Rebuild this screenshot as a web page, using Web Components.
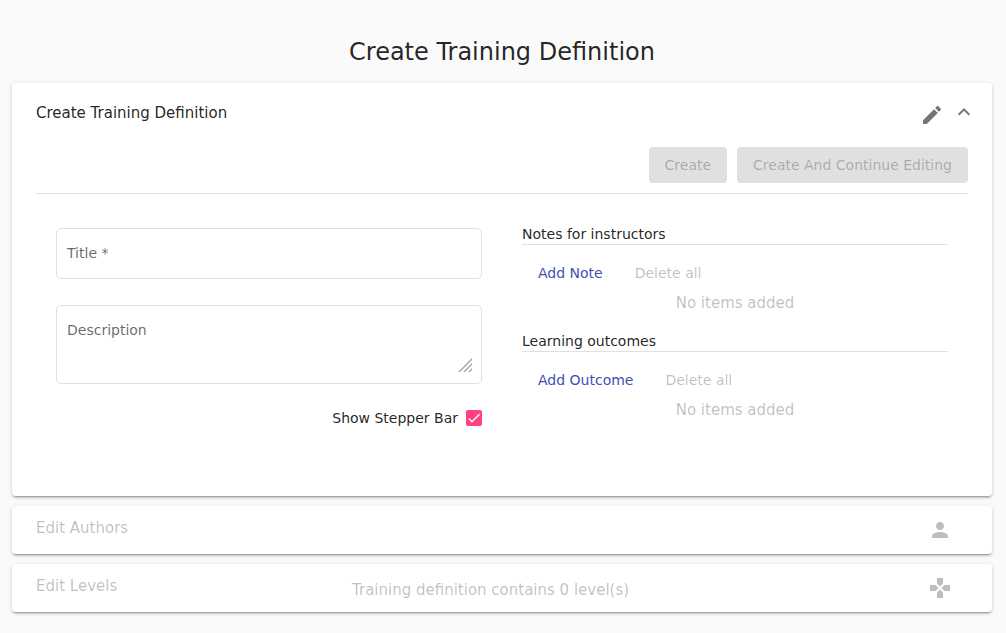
<!DOCTYPE html>
<html lang="en">
<head>
<meta charset="utf-8">
<title>Create Training Definition</title>
<style>
  body { margin: 0; background: #fafafa; color: rgba(0,0,0,.87); font: 14px/20px "DejaVu Sans", sans-serif; }
</style>
</head>
<body>
<training-page></training-page>
<script>
function define(name, html, setup) {
  const tpl = document.createElement('template');
  tpl.innerHTML = html;
  customElements.define(name, class extends HTMLElement {
    constructor() {
      super();
      this.attachShadow({ mode: 'open' }).append(tpl.content.cloneNode(true));
    }
    connectedCallback() { if (setup) setup(this, this.shadowRoot); }
  });
}

define('expansion-panel', `
<style>
  :host { display: block; background: #fff; border-radius: 4px;
    box-shadow: 0 3px 1px -2px rgba(0,0,0,.2), 0 2px 2px 0 rgba(0,0,0,.14), 0 1px 5px 0 rgba(0,0,0,.12); }
  :host([disabled]) { color: rgba(0,0,0,.26); }
  header { display: grid; grid-template-columns: repeat(3, 1fr); column-gap: 16px; align-items: center; padding: 0 24px; height: 48px; font-size: 15px; line-height: 20px; }
  :host([expanded]) header { height: 64px; }
  h2 { margin: 0; font: inherit; padding-bottom: 4px; }
  .text { padding-top: 4px; white-space: nowrap; }
  .tools { display: flex; justify-content: flex-end; align-items: center; padding-right: 16px; }
  :host([expanded]) .tools { padding-right: 0; }
  .body { display: none; padding: 0 24px 16px; }
  :host([expanded]) .body { display: block; }
</style>
<header><h2><slot name="title"></slot></h2><div class="text"><slot name="text"></slot></div><div class="tools"><slot name="tools"></slot></div></header>
<div class="body"><slot></slot></div>`);

define('material-icon', `
<style>
  :host { display: block; width: 24px; height: 24px; }
  svg { display: block; fill: currentColor; }
</style>
<svg width="24" height="24" viewBox="0 0 24 24" aria-hidden="true"><path/></svg>`, (el, root) => {
  const icons = {
    create: 'M3 17.25V21h3.75L17.81 9.94l-3.75-3.75L3 17.25zM20.71 7.04c.39-.39.39-1.02 0-1.41l-2.34-2.34c-.39-.39-1.02-.39-1.41 0l-1.83 1.83 3.75 3.75 1.83-1.83z',
    person: 'M12 12c2.21 0 4-1.79 4-4s-1.79-4-4-4-4 1.79-4 4 1.79 4 4 4zm0 2c-2.67 0-8 1.34-8 4v2h16v-2c0-2.66-5.33-4-8-4z',
    games: 'M15 7.5V2H9v5.5l3 3 3-3zM7.5 9H2v6h5.5l3-3-3-3zM9 16.5V22h6v-5.5l-3-3-3 3zM16.5 9l-3 3 3 3H22V9h-5.5z'
  };
  root.querySelector('path').setAttribute('d', icons[el.getAttribute('name')]);
});

define('app-button', `
<style>
  :host { display: block; }
  button { display: block; height: 36px; padding: 0 16px; border: 0; border-radius: 4px; background: transparent; color: #3f51b5; font: inherit; line-height: 36px; white-space: nowrap; }
  button:disabled { color: rgba(0,0,0,.26); }
  :host([raised]) button { background: #e0e0e0; }
</style>
<button type="button"><slot></slot></button>`, (el, root) => {
  root.querySelector('button').disabled = el.hasAttribute('disabled');
});

define('form-field', `
<style>
  :host { display: block; }
  .field { display: grid; border: 1px solid #e0e0e0; border-radius: 5px; }
  label { grid-area: 1/1; align-self: start; padding: 14px 10px 0; color: rgba(0,0,0,.6); pointer-events: none; }
  input, textarea { grid-area: 1/1; box-sizing: border-box; width: 100%; height: 49px; border: 0; outline: 0; padding: 14px 10px; background: transparent; color: inherit; font: inherit; resize: none; }
  textarea { height: 77px; }
  svg { grid-area: 1/1; place-self: end; margin: 0 9px 11px 0; }
  :host(:not([multiline])) svg { display: none; }
</style>
<div class="field"></div>`, (el, root) => {
  const tag = el.hasAttribute('multiline') ? '<textarea id="control"></textarea>' : '<input id="control" type="text" required>';
  root.querySelector('.field').innerHTML = tag + '<label for="control">' + el.getAttribute('label') + '</label>' +
    '<svg width="14" height="14" viewBox="0 0 14 14" aria-hidden="true" fill="none" stroke="#aaa" stroke-width="1.5"><path d="M0 15L15 0M5 15L15 5M10 15l5-5"/></svg>';
});

define('check-box', `
<style>
  :host { display: flex; justify-content: flex-end; }
  label { display: flex; align-items: center; gap: 8px; }
  .box { display: grid; }
  input { grid-area: 1/1; appearance: none; width: 16px; height: 16px; margin: 0; border: 2px solid #757575; border-radius: 2px; }
  input:checked { background: #ff4081; border: 0; }
  svg { grid-area: 1/1; pointer-events: none; }
</style>
<label><span><slot></slot></span><span class="box"><input type="checkbox" checked><svg width="16" height="16" viewBox="0 0 24 24" aria-hidden="true"><path d="M4.1 12.7L9 17.6 20.3 6.3" fill="none" stroke="#fafafa" stroke-width="2.13"/></svg></span></label>`);

define('item-list', `
<style>
  :host { display: block; }
  h3 { margin: 0; font: inherit; border-bottom: 1px solid #e0e0e0; }
  .actions { display: flex; padding-top: 10px; }
  p { margin: 0; font-size: 15px; line-height: 24px; text-align: center; color: rgba(0,0,0,.26); }
</style>
<h3><slot name="title"></slot></h3>
<div class="actions"><slot></slot></div>
<p>No items added</p>`);

define('training-form', `
<style>
  :host { display: block; }
  .bar { display: flex; justify-content: flex-end; gap: 10px; padding-bottom: 10px; border-bottom: 1px solid #e0e0e0; }
  form { display: grid; grid-template-columns: 1fr 1fr; gap: 40px; padding: 30px 20px 52px; }
  .left { padding-top: 4px; display: grid; gap: 26px; align-content: start; }
  .left check-box { margin-top: -2px; }
  .right { display: grid; gap: 16px; align-content: start; }
</style>
<div class="bar">
  <app-button raised disabled>Create</app-button>
  <app-button raised disabled>Create And Continue Editing</app-button>
</div>
<form>
  <div class="left">
    <form-field label="Title *"></form-field>
    <form-field label="Description" multiline></form-field>
    <check-box>Show Stepper Bar</check-box>
  </div>
  <div class="right">
    <item-list><span slot="title">Notes for instructors</span><app-button>Add Note</app-button><app-button disabled>Delete all</app-button></item-list>
    <item-list><span slot="title">Learning outcomes</span><app-button>Add Outcome</app-button><app-button disabled>Delete all</app-button></item-list>
  </div>
</form>`);

define('training-page', `
<style>
  :host { display: block; padding: 36px 14px 20px 12px; }
  h1 { margin: 0 0 15px; font-size: 24px; line-height: 32px; font-weight: 400; text-align: center; }
  main { display: grid; gap: 10px; }
  .edit { color: #757575; }
  .toggle { border: 0; padding: 0; margin: 0 -8px 6px 8px; background: transparent; }
  .toggle svg { display: block; }
</style>
<h1>Create Training Definition</h1>
<main>
  <expansion-panel expanded>
    <span slot="title">Create Training Definition</span>
    <material-icon slot="tools" class="edit" name="create"></material-icon>
    <button slot="tools" class="toggle" type="button" aria-label="Collapse" aria-expanded="true"><svg width="24" height="16" viewBox="0 0 24 16" fill="none" stroke="#757575" stroke-width="2"><path d="M6.700 10.700L12 5.400l5.300 5.300"/></svg></button>
    <training-form></training-form>
  </expansion-panel>
  <expansion-panel disabled>
    <span slot="title">Edit Authors</span>
    <material-icon slot="tools" name="person"></material-icon>
  </expansion-panel>
  <expansion-panel disabled>
    <span slot="title">Edit Levels</span>
    <span slot="text">Training definition contains 0 level(s)</span>
    <material-icon slot="tools" name="games"></material-icon>
  </expansion-panel>
</main>`);
</script>
</body>
</html>
